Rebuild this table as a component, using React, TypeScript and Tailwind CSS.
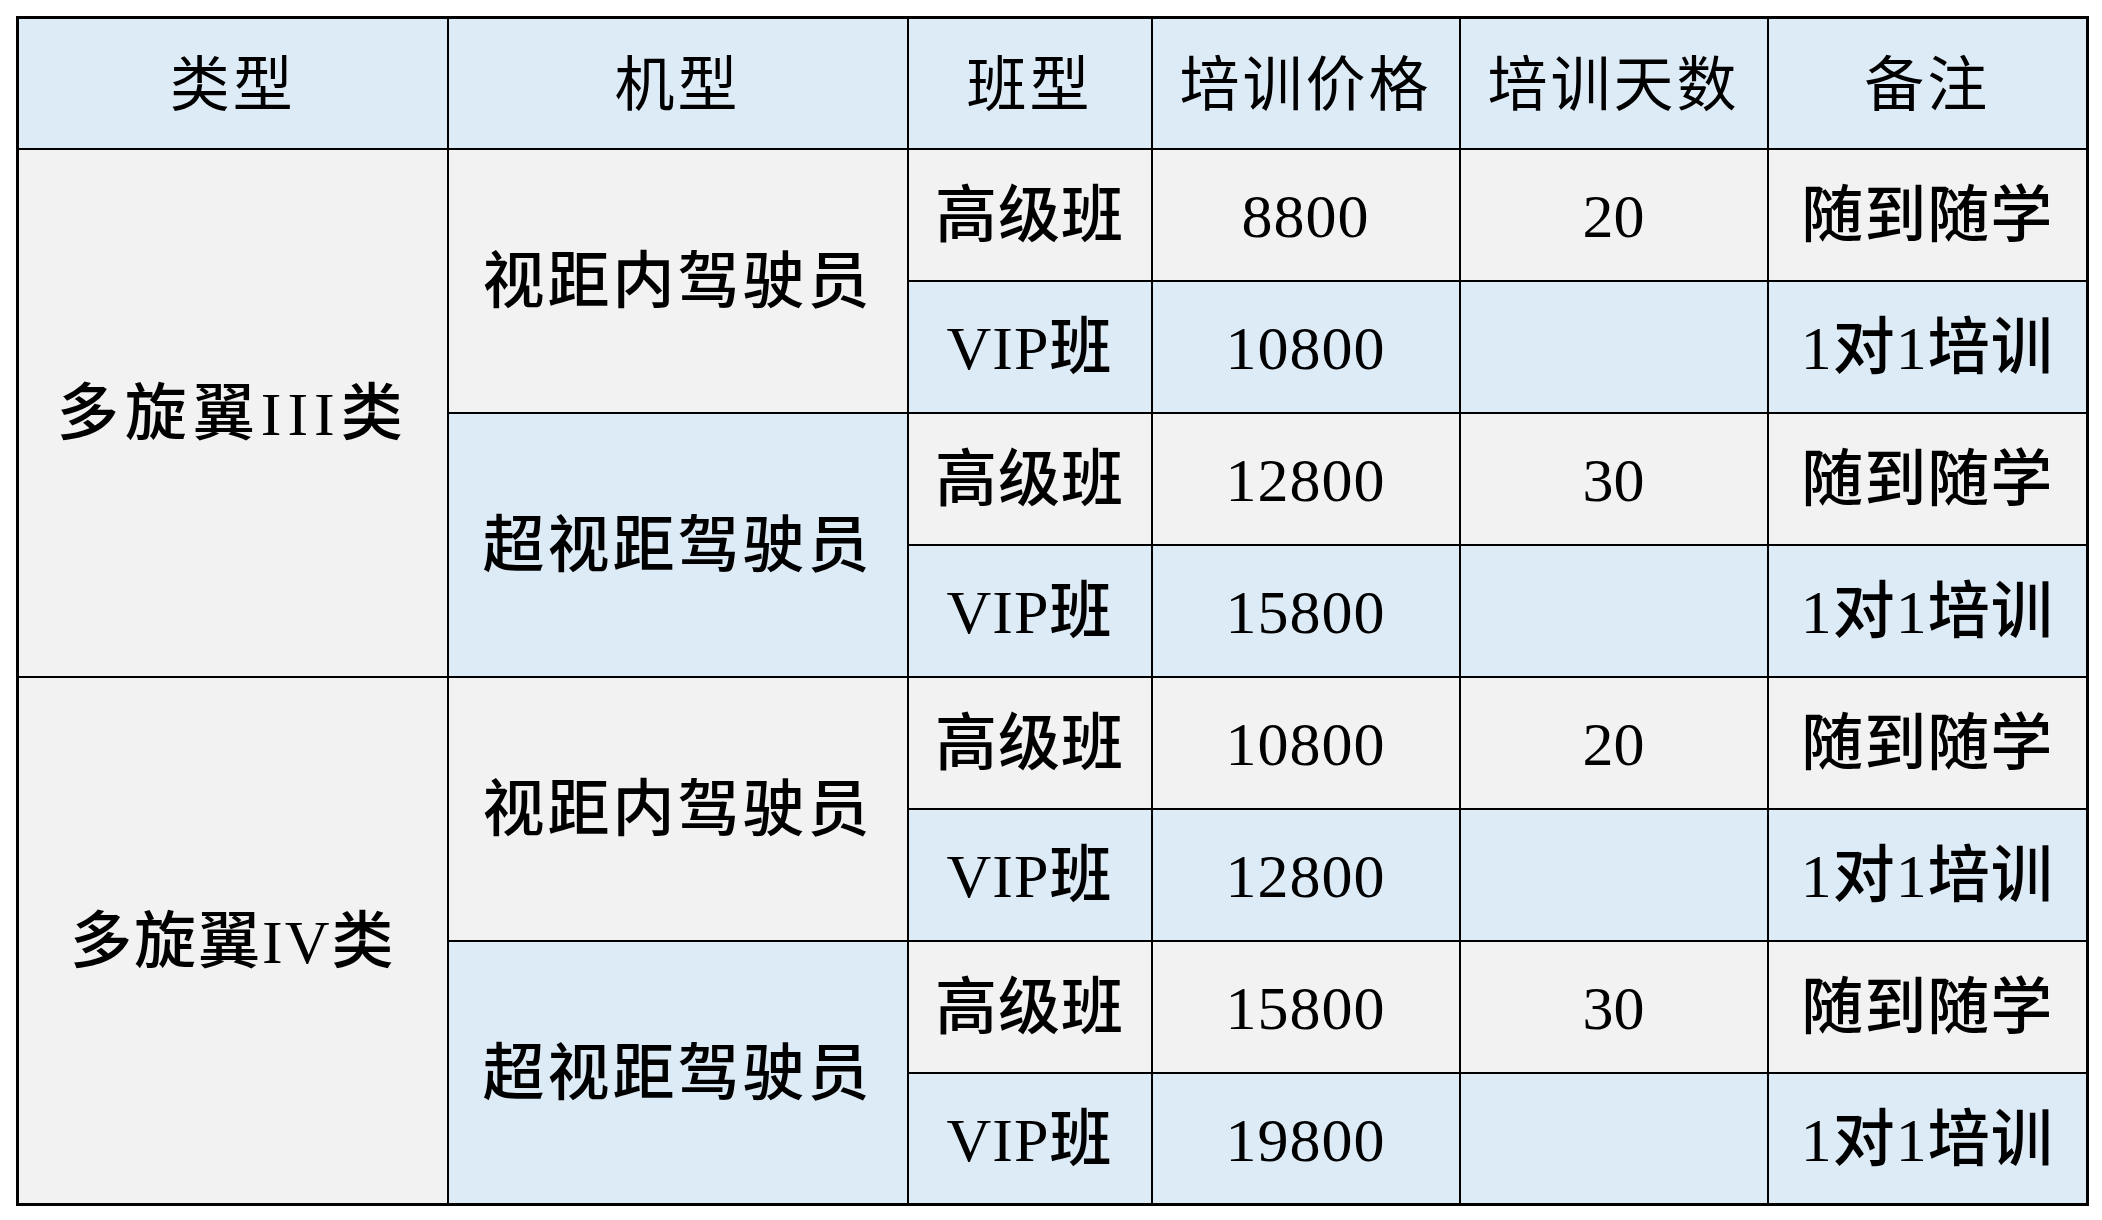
import React from "react";

const gray = "bg-[#f2f2f2]";
const blue = "bg-[#ddebf7]";

type Row = { cls: string; price: string; days?: string; note: string };
type Group = { model: string; modelBg: string; rows: Row[] };
type Category = { name: string; track: string; groups: Group[] };

const data: Category[] = [
  {
    name: "多旋翼III类",
    track: "tracking-[6px]",
    groups: [
      {
        model: "视距内驾驶员",
        modelBg: gray,
        rows: [
          { cls: "高级班", price: "8800", days: "20", note: "随到随学" },
          { cls: "VIP班", price: "10800", note: "1对1培训" },
        ],
      },
      {
        model: "超视距驾驶员",
        modelBg: blue,
        rows: [
          { cls: "高级班", price: "12800", days: "30", note: "随到随学" },
          { cls: "VIP班", price: "15800", note: "1对1培训" },
        ],
      },
    ],
  },
  {
    name: "多旋翼IV类",
    track: "tracking-[2px]",
    groups: [
      {
        model: "视距内驾驶员",
        modelBg: gray,
        rows: [
          { cls: "高级班", price: "10800", days: "20", note: "随到随学" },
          { cls: "VIP班", price: "12800", note: "1对1培训" },
        ],
      },
      {
        model: "超视距驾驶员",
        modelBg: blue,
        rows: [
          { cls: "高级班", price: "15800", days: "30", note: "随到随学" },
          { cls: "VIP班", price: "19800", note: "1对1培训" },
        ],
      },
    ],
  },
];

const headers = ["类型", "机型", "班型", "培训价格", "培训天数", "备注"];
const widths = ["w-[430px]", "w-[460px]", "w-[244px]", "w-[308px]", "w-[308px]", "w-[320px]"];

const cell = "border-2 border-black text-center align-middle p-0";

export default function App() {
  return (
    <div className="min-h-screen bg-white pl-[16px] pt-[16px] font-['Liberation_Serif','Noto_Sans_CJK_SC',serif] text-black">
      <table className="w-[2070px] table-fixed border-collapse border-[3px] border-black">
        <colgroup>
          {widths.map((w, i) => (
            <col key={i} className={w} />
          ))}
        </colgroup>
        <thead>
          <tr className="h-[131px]">
            {headers.map((h) => (
              <th key={h} className={`${cell} ${blue} pt-[6px] text-[60px] font-normal tracking-[3px]`}>
                {h}
              </th>
            ))}
          </tr>
        </thead>
        <tbody className="text-[62px] font-medium">
          {data.map((cat) =>
            cat.groups.map((g, gi) =>
              g.rows.map((r, ri) => {
                const bg = ri === 0 ? gray : blue;
                return (
                  <tr key={cat.name + gi + ri} className="h-[132px]">
                    {gi === 0 && ri === 0 && (
                      <td rowSpan={4} className={`${cell} ${gray} pt-[4px] ${cat.track}`}>
                        {cat.name}
                      </td>
                    )}
                    {ri === 0 && (
                      <td rowSpan={2} className={`${cell} ${g.modelBg} pt-[4px] tracking-[3px]`}>
                        {g.model}
                      </td>
                    )}
                    <td className={`${cell} ${bg} pt-[4px] tracking-[1px]`}>{r.cls}</td>
                    <td className={`${cell} ${bg} pt-[4px] tracking-[1px]`}>{r.price}</td>
                    <td className={`${cell} ${bg} pt-[4px]`}>{r.days ?? ""}</td>
                    <td className={`${cell} ${bg} pt-[4px] tracking-[1px]`}>{r.note}</td>
                  </tr>
                );
              })
            )
          )}
        </tbody>
      </table>
    </div>
  );
}
